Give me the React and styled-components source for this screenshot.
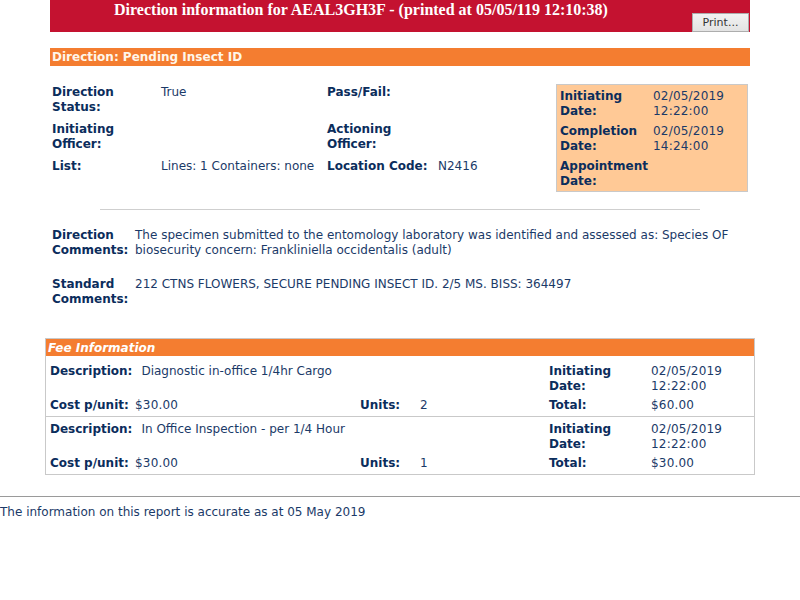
import React from 'react';
import styled, { createGlobalStyle } from 'styled-components';

const GlobalStyle = createGlobalStyle`
  body {
    margin: 0;
    background: #fff;
    font-family: "DejaVu Sans", Verdana, sans-serif;
    font-size: 12px;
    color: #1b3a68;
  }
`;

const fees = [
  {
    description: 'Diagnostic in-office 1/4hr Cargo',
    date: '02/05/2019',
    time: '12:22:00',
    cost: '$30.00',
    units: '2',
    total: '$60.00',
  },
  {
    description: 'In Office Inspection - per 1/4 Hour',
    date: '02/05/2019',
    time: '12:22:00',
    cost: '$30.00',
    units: '1',
    total: '$30.00',
  },
];

function App() {
  return (
    <>
      <GlobalStyle />
      <Page>
        <Header>
          <Title>Direction information for AEAL3GH3F - (printed at 05/05/119 12:10:38)</Title>
          <PrintButton type="button">Print...</PrintButton>
        </Header>

        <SectionBar>Direction: Pending Insect ID</SectionBar>

        <Details>
          <DetailGrid>
            <Label>Direction<br />Status:</Label>
            <Value>True</Value>
            <Label>Pass/Fail:</Label>
            <Value />

            <Label>Initiating<br />Officer:</Label>
            <Value />
            <Label>Actioning<br />Officer:</Label>
            <Value />

            <Label>List:</Label>
            <Value>Lines: 1 Containers: none</Value>
            <Label>Location Code:</Label>
            <Value>N2416</Value>
          </DetailGrid>

          <DateBox>
            <Label>Initiating<br />Date:</Label>
            <Mono>02/05/2019<br />12:22:00</Mono>
            <Label>Completion<br />Date:</Label>
            <Mono>02/05/2019<br />14:24:00</Mono>
            <Label>Appointment<br />Date:</Label>
            <Mono />
          </DateBox>
        </Details>

        <Divider />

        <Comments>
          <Label>Direction<br />Comments:</Label>
          <Value>
            The specimen submitted to the entomology laboratory was identified and assessed as: Species OF
            biosecurity concern: Frankliniella occidentalis (adult)
          </Value>
          <Label>Standard<br />Comments:</Label>
          <Value>212 CTNS FLOWERS, SECURE PENDING INSECT ID. 2/5 MS. BISS: 364497</Value>
        </Comments>
      </Page>

      <FeeBox>
        <FeeHeader>Fee Information</FeeHeader>
        {fees.map((fee) => (
          <FeeRow key={fee.description}>
            <DescCell>
              <Label>Description:</Label>
              <Value>{fee.description}</Value>
            </DescCell>
            <Label>Initiating<br />Date:</Label>
            <Mono>{fee.date}<br />{fee.time}</Mono>

            <Label>Cost p/unit:</Label>
            <Mono>{fee.cost}</Mono>
            <Label>Units:</Label>
            <Mono>{fee.units}</Mono>
            <Label>Total:</Label>
            <Mono>{fee.total}</Mono>
          </FeeRow>
        ))}
      </FeeBox>

      <Footer>The information on this report is accurate as at 05 May 2019</Footer>
    </>
  );
}

const Page = styled.div`
  width: 700px;
  margin: 0 auto;
`;

const Header = styled.div`
  display: flex;
  height: 32px;
  background: #c41230;
`;

const Title = styled.h1`
  flex: 1;
  margin: 0;
  padding: 1px 20px 0 0;
  text-align: center;
  font-family: "Liberation Serif", "Times New Roman", serif;
  font-size: 16px;
  font-weight: bold;
  line-height: 18px;
  color: #fff;
`;

const PrintButton = styled.button`
  align-self: flex-end;
  width: 57px;
  height: 19px;
  margin: 0 1px 0 0;
  padding: 0;
  border: 1px solid #adadad;
  background: linear-gradient(#f2f2f2, #e3e3e3);
  font-family: "DejaVu Sans", Verdana, sans-serif;
  font-size: 11px;
  color: #333;
`;

const SectionBar = styled.div`
  margin-top: 16px;
  height: 18px;
  padding-left: 2px;
  background: #f47d30;
  font-size: 12px;
  font-weight: bold;
  line-height: 18px;
  color: #fff6ea;
`;

const Details = styled.div`
  display: flex;
  justify-content: space-between;
  padding: 18px 2px 0 2px;
`;

const DetailGrid = styled.div`
  display: grid;
  grid-template-columns: 109px 166px 111px 100px;
  row-gap: 7px;
  align-content: start;
  padding-top: 1px;
`;

const Label = styled.div`
  font-weight: bold;
  line-height: 15px;
  color: #0b2d5c;
`;

const Value = styled.div`
  line-height: 15px;
  color: #1b3a68;
`;

const Mono = styled(Value)`
  letter-spacing: 0.2px;
`;

const DateBox = styled.div`
  display: grid;
  grid-template-columns: 93px 90px;
  row-gap: 5px;
  align-content: start;
  width: 192px;
  padding: 4px 0 3px 3px;
  box-sizing: border-box;
  height: 108px;
  background: #ffc996;
  border: 1px solid #c9c9c9;
`;

const Divider = styled.hr`
  width: 600px;
  margin: 17px auto 0;
  border: 0;
  border-top: 1px solid #cfcfcf;
`;

const Comments = styled.div`
  display: grid;
  grid-template-columns: 83px 1fr;
  row-gap: 19px;
  padding: 18px 0 0 2px;
`;

const FeeBox = styled.div`
  width: 710px;
  margin: 31px auto 0;
  border: 1px solid #c9c9c9;
  box-sizing: border-box;
`;

const FeeHeader = styled.div`
  height: 17px;
  margin-bottom: 3px;
  padding-left: 2px;
  background: #f47d30;
  font-size: 12px;
  font-weight: bold;
  font-style: italic;
  line-height: 18px;
  color: #fff;
`;

const FeeRow = styled.div`
  display: grid;
  grid-template-columns: 85px 225px 60px 129px 102px 1fr;
  row-gap: 4px;
  padding: 5px 0 3px 4px;
  & + & {
    border-top: 1px solid #c9c9c9;
  }
`;

const DescCell = styled.div`
  grid-column: 1 / 5;
  display: flex;
  gap: 9px;
`;

const Footer = styled.div`
  margin-top: 21px;
  padding-top: 8px;
  border-top: 1px solid #9a9a9a;
  line-height: 15px;
  color: #1b3a68;
`;

export default App;
